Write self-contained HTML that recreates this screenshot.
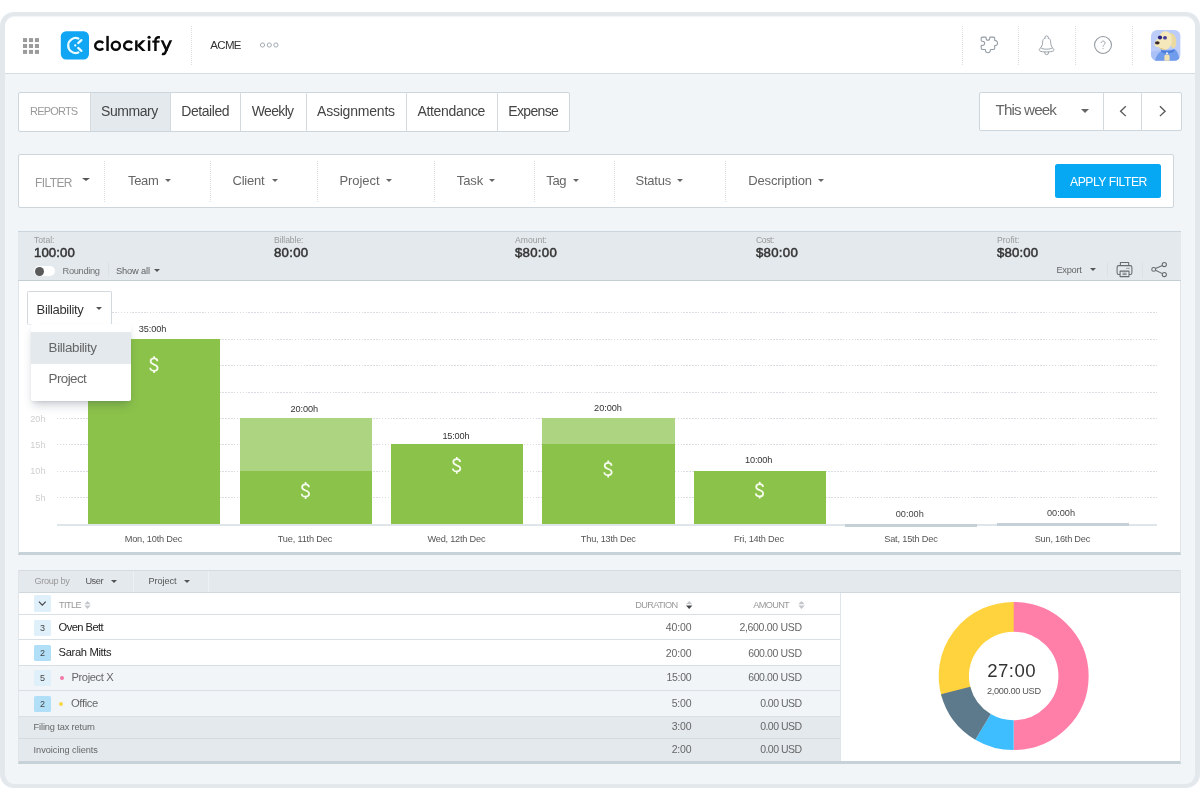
<!DOCTYPE html>
<html lang="en"><head><meta charset="utf-8"><title>Clockify - Summary report</title>
<style>
html,body{margin:0;padding:0;}
body{width:1200px;height:801px;position:relative;overflow:hidden;background:#fff;
 font-family:"Liberation Sans",sans-serif;}
.a{position:absolute;box-sizing:border-box;}
.t{position:absolute;white-space:nowrap;line-height:1;z-index:2;}
.t.z3{z-index:6;}
svg{position:absolute;overflow:visible;}
#frame{left:0px;top:12px;width:1200px;height:776px;border:4.6px solid #e3e8ed;border-left-width:5px;border-right-width:5px;border-radius:14px;background:#f1f5f8;}
#hdr{left:5px;top:16.5px;width:1190px;height:57.2px;background:#fff;border-radius:9.5px 9.5px 0 0;border-bottom:1.2px solid #d6dce1;}
.vd{width:0;border-left:1px dotted #d9dee3;}
.box{background:#fff;border:1px solid #cdd6dc;border-radius:2px;}
.sep{width:1px;background:#d3dadf;}
.caret{width:0;height:0;border-left:3.8px solid transparent;border-right:3.8px solid transparent;border-top:3.6px solid #666;}
.caret.sm{border-left-width:3.3px;border-right-width:3.3px;border-top-width:3.5px;border-top-color:#555;}
.caret.lg{border-left-width:4.5px;border-right-width:4.5px;border-top-width:4.6px;}
#sum{left:18.4px;top:231px;width:1163px;height:50px;background:#e4e9ed;border-top:1px solid #ccd5db;border-bottom:1.4px solid #c3ced5;}
#chart{left:18.4px;top:281px;width:1163px;height:274px;background:#fff;border-left:1px solid #dfe5e9;border-right:1px solid #dfe5e9;border-bottom:3.6px solid #c6d1d8;}
.gl{left:56.6px;width:1100.6px;height:1.2px;background:repeating-linear-gradient(to right,#d9dde1 0,#d9dde1 1.5px,rgba(255,255,255,0) 1.5px,rgba(255,255,255,0) 2.9px);}
.bar{background:#8bc24a;}
.barl{background:#add581;}
.bar0{background:#c5cfd6;height:3px;}
#menu{left:31px;top:323.8px;width:100.4px;height:77.4px;background:#fff;border-radius:2px;z-index:5;
 box-shadow:0 6px 9px -2px rgba(40,60,80,.24),0 2px 3px -1px rgba(40,60,80,.10);}
#menu .hi{position:absolute;left:0;top:7.8px;width:100%;height:32px;background:#e4e9ed;}
#tbl{left:18.4px;top:570.4px;width:1163px;height:193.4px;background:#fff;border-left:1px solid #dfe5e9;border-right:1px solid #dfe5e9;border-bottom:3.2px solid #c6d1d8;overflow:hidden;}
.row{left:0;width:821px;border-bottom:1px solid #d9e0e5;}
.bdg{left:34px;width:16.6px;height:16.4px;border-radius:1.5px;}
.b1{background:#e0f0fa;}
.b2{background:#b2dff8;}
.dot{width:4.2px;height:4.2px;border-radius:50%;}
#tx{position:absolute;left:0;top:0;width:1200px;height:801px;z-index:6;will-change:transform;}
.t.md{-webkit-text-stroke:0.5px #333;}

</style></head>
<body>
<div class="a" id="frame"></div>
<div class="a" id="hdr"></div>

<!-- ===== header: app grid, logo, workspace ===== -->
<svg style="left:22.5px;top:37.8px" width="16" height="16" viewBox="0 0 15.6 15.4">
 <g fill="#9b9b9b">
  <rect x="0" y="0" width="4" height="3.9"/><rect x="5.8" y="0" width="4" height="3.9"/><rect x="11.6" y="0" width="4" height="3.9"/>
  <rect x="0" y="5.75" width="4" height="3.9"/><rect x="5.8" y="5.75" width="4" height="3.9"/><rect x="11.6" y="5.75" width="4" height="3.9"/>
  <rect x="0" y="11.5" width="4" height="3.9"/><rect x="5.8" y="11.5" width="4" height="3.9"/><rect x="11.6" y="11.5" width="4" height="3.9"/>
 </g>
</svg>

<svg id="logo" style="left:55px;top:25px" width="125" height="40" viewBox="55 25 125 40">
 <rect x="60.8" y="31.2" width="28.2" height="28.3" rx="5.4" fill="#10a6f4"/>
 <g fill="none" stroke="#ecfbff" stroke-width="2.2" stroke-linecap="round">
  <path d="M78.4 38.5 A7.5 7.5 0 1 0 78.4 52.5"/>
  <path d="M78.2 43.1 L81.4 40.1"/>
  <path d="M78.2 47.9 L81.4 50.9"/>
 </g>
 <circle cx="75.25" cy="45.45" r="1.15" fill="#ecfbff"/>
 <defs><clipPath id="xh"><rect x="90" y="40.35" width="90" height="10.6"/></clipPath>
 <clipPath id="yh"><rect x="158" y="40.35" width="20" height="16"/></clipPath></defs>
 <g fill="none" stroke="#0a0a0a" stroke-width="2.45">
  <path d="M103.16 43.13 A4.45 4.1 0 1 0 103.16 48.17"/>
  <path d="M107.55 35.9 V50.95"/>
  <circle cx="115.85" cy="45.65" r="4.05"/>
  <path d="M132.1 43.13 A4.45 4.1 0 1 0 132.1 48.17"/>
  <path d="M136.35 40.35 V50.95"/>
  <path clip-path="url(#xh)" d="M144.9 39.2 L138.5 45.6 L145.2 52.2" stroke-linejoin="miter"/>
  <path d="M149.1 40.35 V50.95"/>
  <path d="M155.45 50.95 V40.4 A3.1 3.1 0 0 1 158.55 37.25 H159.9"/>
  <path d="M152.3 41.6 H159.5" stroke-width="2.1"/>
  <path clip-path="url(#yh)" d="M161.4 39 L166.9 51"/>
  <path clip-path="url(#yh)" d="M171.4 39 L165.3 52.6 Q164.3 54.6 161.9 53.9"/>
 </g>
 <circle cx="149.1" cy="37.25" r="1.6" fill="#0a0a0a"/>
</svg>

<div class="a vd" style="left:191px;top:26px;height:39px"></div>
<svg style="left:258px;top:41px" width="22" height="8" viewBox="258 41 22 8">
 <g fill="none" stroke="#a3abb2" stroke-width="1">
  <circle cx="262.5" cy="45" r="2.1"/><circle cx="269.3" cy="45" r="2.1"/><circle cx="275.9" cy="45" r="2.1"/>
 </g>
</svg>

<!-- header right -->
<div class="a vd" style="left:961.5px;top:26px;height:39px"></div>
<div class="a vd" style="left:1018.3px;top:26px;height:39px"></div>
<div class="a vd" style="left:1074.9px;top:26px;height:39px"></div>
<div class="a vd" style="left:1132px;top:26px;height:39px"></div>

<!-- puzzle -->
<svg id="puzzle" style="left:979px;top:35px" width="20" height="20" viewBox="979 35 20 20">
 <path fill="none" stroke="#949ca4" stroke-width="1.1" stroke-linejoin="round"
  d="M982.4 37.1 H985.5 C985.9 37.1 986.1 37.5 986.1 38 C986.1 39.4 986.9 40.3 987.9 40.3 C988.9 40.3 989.7 39.4 989.7 38 C989.7 37.5 989.9 37.1 990.3 37.1 H993.5 Q994.7 37.1 994.7 38.3 V40.2 C994.7 40.6 995 40.8 995.4 40.7 C996.6 40.5 997.5 41.6 997.5 43.1 C997.5 44.6 996.6 45.7 995.4 45.5 C995 45.4 994.7 45.6 994.7 46 V48.3 Q994.7 49.5 993.5 49.5 H990.8 C990.4 49.5 990.2 49.8 990.3 50.2 C990.6 51.5 989.5 52.7 987.9 52.7 C986.3 52.7 985.2 51.5 985.5 50.2 C985.6 49.8 985.4 49.5 985 49.5 H982.4 Q981.2 49.5 981.2 48.3 V46 C981.2 45.6 981.6 45.4 982 45.4 C983.6 45.5 984.7 44.6 984.7 43.3 C984.7 42 983.6 41.1 982 41.2 C981.6 41.2 981.2 41 981.2 40.6 V38.3 Q981.2 37.1 982.4 37.1 Z"/>
</svg>

<!-- bell -->
<svg id="bell" style="left:1037px;top:34px" width="20" height="22" viewBox="1037 34 20 22">
 <g fill="none" stroke="#9ca4ab" stroke-width="1" stroke-linejoin="round" stroke-linecap="round">
  <path d="M1045 38.2 V37.4 A1.65 1.5 0 0 1 1048.3 37.4 V38.2"/>
  <path d="M1045 38.2 C1043.2 38.5 1042.6 40 1042.6 42.4 C1042.6 45.3 1041.5 47 1039.9 48.6 C1039 49.5 1039 50.4 1039.8 50.9 C1042 52.3 1051.2 52.3 1053.4 50.9 C1054.2 50.4 1054.2 49.5 1053.3 48.6 C1051.7 47 1050.7 45.3 1050.7 42.4 C1050.7 40 1050.1 38.5 1048.3 38.2"/>
  <path d="M1040.6 47.9 C1043 49.7 1050.2 49.7 1052.6 47.9"/>
  <path d="M1044.8 52 V53 A1.85 1.6 0 0 0 1048.5 53 V52"/>
 </g>
</svg>

<!-- help -->
<svg id="help" style="left:1093px;top:34px" width="22" height="22" viewBox="1093 34 22 22">
 <circle cx="1103" cy="45" r="8.45" fill="none" stroke="#92989e" stroke-width="1.05"/>
 <path d="M1101.1 43 a2 2 0 1 1 3.1 1.7 c-0.8 0.55 -1.15 1 -1.15 2.1" fill="none" stroke="#a6abb0" stroke-width="1"/>
 <circle cx="1103.05" cy="48.6" r="0.65" fill="#a6abb0"/>
</svg>

<!-- avatar -->
<svg id="avatar" style="left:1151px;top:30.2px" width="29.6" height="30.8" viewBox="0 0 29.6 30.8">
 <defs><clipPath id="avc"><rect x="0" y="0" width="29.6" height="30.8" rx="6.3"/></clipPath></defs>
 <g clip-path="url(#avc)">
  <rect width="29.6" height="30.8" fill="#bccdf9"/>
  <path d="M0 31 L0 22 L9 20 L6 31 Z" fill="#a9c1f7"/>
  <path d="M4 31 C5 25 9 21 13 20 L24 19.5 C27 21.5 28 26 28.5 31 Z" fill="#719cec"/>
  <path d="M9.5 19.3 Q16 23.5 23.5 19 L23 21.8 Q16 25.2 10.5 22 Z" fill="#4c7dd9"/>
  <path d="M19 3 C23 3 25.5 7 25.3 12 C25.2 16 24 18.5 22 18 C20 17.5 19.5 14 19.5 11 Z" fill="#eadaa2"/>
  <path d="M14 1.2 C18 1 20.5 4 20.8 8 C21 13 20 17.5 16 19.3 C12 20.5 8.5 19.5 7.5 17 C5 17.5 3 15.5 3.5 13.5 C4 11.5 6 10 7.5 7 C9 4 11 1.5 14 1.2 Z" fill="#f5e8ba"/>
  <path d="M7.5 17 C9 19.5 12 20.3 15.5 19.4 C13 18.6 10 18.5 7.5 17 Z" fill="#d9c58c"/>
  <ellipse cx="9" cy="7.5" rx="2.1" ry="1.95" fill="#27257c"/>
  <ellipse cx="14" cy="7.75" rx="1.95" ry="1.85" fill="#463c9c"/>
  <ellipse cx="6.3" cy="12.8" rx="2.4" ry="1.6" fill="#3a2a2c"/>
  <rect x="13.4" y="24.4" width="5.2" height="8" rx="2.2" fill="#f1e2b4"/>
  <circle cx="16" cy="23.2" r="0.9" fill="#fff"/>
 </g>
</svg>

<!-- ===== tabs ===== -->
<div class="a box" style="left:18.2px;top:91.6px;width:551.6px;height:40px"></div>
<div class="a" style="left:90.6px;top:92.6px;width:79.6px;height:38px;background:#e4e9ed"></div>
<div class="a sep" style="left:90.2px;top:92px;height:39px"></div>
<div class="a sep" style="left:169.8px;top:92px;height:39px"></div>
<div class="a sep" style="left:240.2px;top:92px;height:39px"></div>
<div class="a sep" style="left:306px;top:92px;height:39px"></div>
<div class="a sep" style="left:406px;top:92px;height:39px"></div>
<div class="a sep" style="left:497.2px;top:92px;height:39px"></div>

<!-- date range -->
<div class="a box" style="left:979.3px;top:92px;width:202.6px;height:38.8px"></div>
<div class="a sep" style="left:1103px;top:92.5px;height:38px"></div>
<div class="a sep" style="left:1141.3px;top:92.5px;height:38px"></div>
<div class="a caret lg" style="left:1081px;top:109.4px"></div>
<svg style="left:1117px;top:104px" width="12" height="14" viewBox="1117 104 12 14"><path d="M1125.8 106.3 L1120.6 111.2 L1125.8 116.1" fill="none" stroke="#555" stroke-width="1.3"/></svg>
<svg style="left:1156px;top:104px" width="12" height="14" viewBox="1156 104 12 14"><path d="M1159.9 106.3 L1165.1 111.2 L1159.9 116.1" fill="none" stroke="#555" stroke-width="1.3"/></svg>

<!-- ===== filter bar ===== -->
<div class="a box" style="left:18.4px;top:154.4px;width:1155.6px;height:53.2px"></div>
<div class="a vd" style="left:104.4px;top:160.5px;height:41px"></div>
<div class="a vd" style="left:210.4px;top:160.5px;height:41px"></div>
<div class="a vd" style="left:316.6px;top:160.5px;height:41px"></div>
<div class="a vd" style="left:433.6px;top:160.5px;height:41px"></div>
<div class="a vd" style="left:534.1px;top:160.5px;height:41px"></div>
<div class="a vd" style="left:613.6px;top:160.5px;height:41px"></div>
<div class="a vd" style="left:724.8px;top:160.5px;height:41px"></div>
<div class="a caret" style="left:81.5px;top:178.3px;border-top-color:#555;border-left-width:4.1px;border-right-width:4.1px;border-top-width:3.8px"></div>
<div class="a caret" style="left:165.4px;top:178.7px"></div>
<div class="a caret" style="left:272px;top:178.7px"></div>
<div class="a caret" style="left:385.8px;top:178.7px"></div>
<div class="a caret" style="left:488.8px;top:178.7px"></div>
<div class="a caret" style="left:573px;top:178.7px"></div>
<div class="a caret" style="left:676.8px;top:178.7px"></div>
<div class="a caret" style="left:818.2px;top:178.7px"></div>
<div class="a" style="left:1055px;top:164.2px;width:106.3px;height:33.4px;background:#06a8f4;border-radius:2.5px"></div>

<!-- ===== summary bar ===== -->
<div class="a" id="sum"></div>
<div class="a" style="left:34.3px;top:266.3px;width:20.8px;height:9.8px;border-radius:5px;background:#fff"></div>
<div class="a" style="left:34.9px;top:266.6px;width:9.2px;height:9.2px;border-radius:50%;background:#5a5a5a"></div>
<div class="a sep" style="left:107.6px;top:262px;height:15px;background:#dbe1e6"></div>
<div class="a caret sm" style="left:153.8px;top:268.8px"></div>
<div class="a caret sm" style="left:1090.2px;top:268.2px"></div>
<div class="a sep" style="left:1106.8px;top:262px;height:15px;background:#dbe1e5"></div>
<div class="a sep" style="left:1141.8px;top:262px;height:15px;background:#dbe1e5"></div>
<!-- printer -->
<svg id="printer" style="left:1115px;top:260px" width="20" height="19" viewBox="1115 260 20 19">
 <g fill="none" stroke="#666b70" stroke-width="1.05" stroke-linejoin="round">
  <path d="M1120.4 265.6 V262.4 H1128.7 V265.6"/>
  <rect x="1117.1" y="265.6" width="14.8" height="8.8" rx="1.7"/>
  <rect x="1120.1" y="271.1" width="8.9" height="5.5" fill="#e4e9ed"/>
  <path d="M1122.5 273.2 h4.1 M1122.5 274.6 h4.1" stroke-width="0.8"/>
  <path d="M1126.4 268.3 h3" stroke-width="1" stroke-dasharray="1.1 0.8"/>
 </g>
</svg>
<!-- share -->
<svg id="share" style="left:1150px;top:260px" width="20" height="19" viewBox="1150 260 20 19">
 <g fill="none" stroke="#666b70" stroke-width="1.05">
  <circle cx="1153.7" cy="269.4" r="1.95"/>
  <circle cx="1164.3" cy="264.5" r="2.1"/>
  <circle cx="1164.3" cy="274.5" r="2.1"/>
  <path d="M1155.5 268.5 L1162.4 265.4 M1155.5 270.3 L1162.4 273.6"/>
 </g>
</svg>

<!-- ===== chart ===== -->
<div class="a" id="chart"></div>
<div class="a gl" style="top:312.3px"></div>
<div class="a gl" style="top:338.7px"></div>
<div class="a gl" style="top:365.1px"></div>
<div class="a gl" style="top:391.5px"></div>
<div class="a gl" style="top:417.9px"></div>
<div class="a gl" style="top:444.3px"></div>
<div class="a gl" style="top:470.7px"></div>
<div class="a gl" style="top:497.1px"></div>
<div class="a" style="left:56.6px;top:524px;width:1100.6px;height:2.2px;background:#dfe6ea"></div>
<div class="a bar" style="left:88px;top:338.6px;width:132.4px;height:185.6px"></div>
<div class="a barl" style="left:239.8px;top:418px;width:132.3px;height:54px"></div>
<div class="a bar" style="left:239.8px;top:471.2px;width:132.3px;height:53px"></div>
<div class="a bar" style="left:391px;top:444.2px;width:132.3px;height:80px"></div>
<div class="a barl" style="left:542.2px;top:418px;width:132.5px;height:27px"></div>
<div class="a bar" style="left:542.2px;top:444.2px;width:132.5px;height:80px"></div>
<div class="a bar" style="left:693.9px;top:471.3px;width:132.3px;height:52.9px"></div>
<div class="a bar0" style="left:844.8px;top:523.6px;width:132.6px"></div>
<div class="a bar0" style="left:996.5px;top:523.3px;width:132.8px"></div>
<!-- dollar icons -->
<svg style="left:0;top:0;z-index:1" width="1200" height="801" viewBox="0 0 1200 801">
 <g fill="none" stroke="#f6fcee" stroke-width="1.75">
  <g transform="translate(153.9 364.6)"><path d="M3.5 -3.3 C3.5 -5 2 -6.2 0.2 -6.2 C-1.8 -6.2 -3.3 -5 -3.3 -3.3 C-3.3 -1.4 -1.8 -0.7 0.2 0 C2.4 0.7 3.7 1.5 3.7 3.3 C3.7 5 2.2 6.2 0.2 6.2 C-1.9 6.2 -3.6 5 -3.7 3.2"/><path d="M0.2 -8.4 V-6 M0.2 6 V8.4"/></g>
  <g transform="translate(305.4 490.5)"><path d="M3.5 -3.3 C3.5 -5 2 -6.2 0.2 -6.2 C-1.8 -6.2 -3.3 -5 -3.3 -3.3 C-3.3 -1.4 -1.8 -0.7 0.2 0 C2.4 0.7 3.7 1.5 3.7 3.3 C3.7 5 2.2 6.2 0.2 6.2 C-1.9 6.2 -3.6 5 -3.7 3.2"/><path d="M0.2 -8.4 V-6 M0.2 6 V8.4"/></g>
  <g transform="translate(456.6 465.3)"><path d="M3.5 -3.3 C3.5 -5 2 -6.2 0.2 -6.2 C-1.8 -6.2 -3.3 -5 -3.3 -3.3 C-3.3 -1.4 -1.8 -0.7 0.2 0 C2.4 0.7 3.7 1.5 3.7 3.3 C3.7 5 2.2 6.2 0.2 6.2 C-1.9 6.2 -3.6 5 -3.7 3.2"/><path d="M0.2 -8.4 V-6 M0.2 6 V8.4"/></g>
  <g transform="translate(608 469)"><path d="M3.5 -3.3 C3.5 -5 2 -6.2 0.2 -6.2 C-1.8 -6.2 -3.3 -5 -3.3 -3.3 C-3.3 -1.4 -1.8 -0.7 0.2 0 C2.4 0.7 3.7 1.5 3.7 3.3 C3.7 5 2.2 6.2 0.2 6.2 C-1.9 6.2 -3.6 5 -3.7 3.2"/><path d="M0.2 -8.4 V-6 M0.2 6 V8.4"/></g>
  <g transform="translate(759.5 490.2)"><path d="M3.5 -3.3 C3.5 -5 2 -6.2 0.2 -6.2 C-1.8 -6.2 -3.3 -5 -3.3 -3.3 C-3.3 -1.4 -1.8 -0.7 0.2 0 C2.4 0.7 3.7 1.5 3.7 3.3 C3.7 5 2.2 6.2 0.2 6.2 C-1.9 6.2 -3.6 5 -3.7 3.2"/><path d="M0.2 -8.4 V-6 M0.2 6 V8.4"/></g>
 </g>
</svg>
<!-- dropdown button -->
<div class="a box" style="left:27.4px;top:291.4px;width:84.4px;height:33.2px;border-color:#d3dadf;border-bottom-color:#e9edf0"></div>
<div class="a caret" style="left:95.6px;top:307px;border-top-color:#555"></div>
<div class="a" id="menu"><div class="hi"></div></div>

<!-- ===== table ===== -->
<div class="a" id="tbl">
 <div class="a" style="left:0;top:0;width:1163px;height:22.4px;background:#e4e9ed;border-top:1px solid #d5dce1;border-bottom:1px solid #d0d8de"></div>
 <div class="a sep" style="left:113.4px;top:1px;height:21px;background:#edf1f4"></div>
 <div class="a sep" style="left:188.2px;top:1px;height:21px;background:#edf1f4"></div>
 <div class="a row" style="top:22.4px;height:21.8px;background:#fff"></div>
 <div class="a row" style="top:44.2px;height:25.2px;background:#fff"></div>
 <div class="a row" style="top:69.4px;height:26px;background:#fff"></div>
 <div class="a row" style="top:95.4px;height:25.5px;background:#f1f5f8"></div>
 <div class="a row" style="top:120.9px;height:25.5px;background:#f1f5f8"></div>
 <div class="a row" style="top:146.4px;height:22.2px;background:#e4e9ed;border-bottom-color:#d3dae0"></div>
 <div class="a row" style="top:168.6px;height:22px;background:#e4e9ed;border-bottom:0"></div>
 <div class="a sep" style="left:820.7px;top:22.4px;height:168px;background:#dfe5e9"></div>
</div>
<!-- header row controls -->
<div class="a bdg b1" style="top:595.4px"></div>
<svg style="left:37px;top:599px" width="11" height="9" viewBox="37 599 11 9"><path d="M38.9 601.7 L42.3 605.1 L45.7 601.7" fill="none" stroke="#444" stroke-width="1.2"/></svg>
<svg style="left:84px;top:600px" width="8" height="10" viewBox="84 600 8 10"><path d="M84.4 604.2 L87.5 600.9 L90.6 604.2 Z M84.4 605.6 L87.5 608.9 L90.6 605.6 Z" fill="#c2c6ca"/></svg>
<svg style="left:685px;top:600px" width="9" height="10" viewBox="685 600 9 10"><path d="M686 604.2 L689.2 600.9 L692.4 604.2 Z" fill="#c2c6ca"/><path d="M686 605.6 L689.2 608.9 L692.4 605.6 Z" fill="#444"/></svg>
<svg style="left:797px;top:600px" width="9" height="10" viewBox="797 600 9 10"><path d="M798.3 604.2 L801.5 600.9 L804.7 604.2 Z M798.3 605.6 L801.5 608.9 L804.7 605.6 Z" fill="#c2c6ca"/></svg>
<div class="a caret sm" style="left:111.2px;top:579.6px"></div>
<div class="a caret sm" style="left:184.2px;top:579.6px"></div>
<div class="a bdg b1" style="top:620.1px"></div>
<div class="a bdg b2" style="top:644.5px"></div>
<div class="a bdg b1" style="top:670.1px"></div>
<div class="a bdg b2" style="top:695.6px"></div>
<div class="a dot" style="left:59.5px;top:675.5px;background:#f27aa5"></div>
<div class="a dot" style="left:58.9px;top:701.9px;background:#f6d84a"></div>

<!-- donut -->
<svg id="donut" style="left:930px;top:595px" width="170" height="162" viewBox="930 595 170 162">
 <g fill="none" stroke-width="30.2" transform="translate(0 676) scale(1 0.988) translate(0 -675.8)">
  <path d="M956.4 693.3 A59.9 59.9 0 0 1 1014.5 615.9" stroke="#ffd33d"/>
  <path d="M1013.7 615.9 A59.9 59.9 0 0 1 1013.7 735.7" stroke="#ff7fa8"/>
  <path d="M1013.7 735.7 A59.9 59.9 0 0 1 983.03 727.25" stroke="#3ebeff"/>
  <path d="M983.03 727.25 A59.9 59.9 0 0 1 955.63 690.5" stroke="#5d7a8c"/>
 </g>
</svg>

<div id="tx">
<span class="t" id="t0" style="top:40.00px;font-size:11.5px;color:#333;letter-spacing:-0.681px;left:210.30px;">ACME</span>
<span class="t" id="t1" style="top:106.00px;font-size:11px;color:#9a9a9a;letter-spacing:-0.804px;left:30.00px;">REPORTS</span>
<span class="t" id="t2" style="top:104.00px;font-size:14px;color:#444;letter-spacing:-0.428px;left:101.00px;">Summary</span>
<span class="t" id="t3" style="top:104.00px;font-size:14px;color:#444;letter-spacing:-0.434px;left:181.25px;">Detailed</span>
<span class="t" id="t4" style="top:104.00px;font-size:14px;color:#444;letter-spacing:-0.663px;left:251.75px;">Weekly</span>
<span class="t" id="t5" style="top:104.00px;font-size:14px;color:#444;letter-spacing:-0.207px;left:317.00px;">Assignments</span>
<span class="t" id="t6" style="top:104.00px;font-size:14px;color:#444;letter-spacing:-0.334px;left:417.50px;">Attendance</span>
<span class="t" id="t7" style="top:104.00px;font-size:14px;color:#444;letter-spacing:-0.649px;left:508.25px;">Expense</span>
<span class="t" id="t8" style="top:102.00px;font-size:15.2px;color:#666;letter-spacing:-0.883px;left:995.60px;">This week</span>
<span class="t" id="t9" style="top:177.00px;font-size:12px;color:#999;letter-spacing:-0.597px;left:35.00px;">FILTER</span>
<span class="t" id="t10" style="top:174.00px;font-size:13px;color:#666;letter-spacing:-0.339px;left:128.00px;">Team</span>
<span class="t" id="t11" style="top:174.00px;font-size:13px;color:#666;letter-spacing:-0.244px;left:232.50px;">Client</span>
<span class="t" id="t12" style="top:174.00px;font-size:13px;color:#666;letter-spacing:-0.073px;left:339.50px;">Project</span>
<span class="t" id="t13" style="top:174.00px;font-size:13px;color:#666;letter-spacing:-0.068px;left:456.75px;">Task</span>
<span class="t" id="t14" style="top:174.00px;font-size:13px;color:#666;letter-spacing:-0.344px;left:546.25px;">Tag</span>
<span class="t" id="t15" style="top:174.00px;font-size:13px;color:#666;letter-spacing:-0.216px;left:635.50px;">Status</span>
<span class="t" id="t16" style="top:174.00px;font-size:13px;color:#666;letter-spacing:-0.125px;left:748.25px;">Description</span>
<span class="t" id="t17" style="top:176.00px;font-size:12.2px;color:#fff;letter-spacing:-0.474px;left:1070.00px;">APPLY FILTER</span>
<span class="t" id="t18" style="top:236.00px;font-size:8.6px;color:#999;letter-spacing:-0.006px;left:34.00px;">Total:</span>
<span class="t md" id="t19" style="top:246.00px;font-size:13.2px;color:#333;letter-spacing:0.090px;left:34.00px;">100:00</span>
<span class="t" id="t20" style="top:236.00px;font-size:8.6px;color:#999;letter-spacing:-0.074px;left:274.00px;">Billable:</span>
<span class="t md" id="t21" style="top:246.00px;font-size:13.2px;color:#333;letter-spacing:0.269px;left:274.00px;">80:00</span>
<span class="t" id="t22" style="top:236.00px;font-size:8.6px;color:#999;letter-spacing:0.000px;left:515.00px;">Amount:</span>
<span class="t md" id="t23" style="top:246.00px;font-size:13.2px;color:#333;letter-spacing:0.290px;left:515.00px;">$80:00</span>
<span class="t" id="t24" style="top:236.00px;font-size:8.6px;color:#999;letter-spacing:-0.387px;left:756.00px;">Cost:</span>
<span class="t md" id="t25" style="top:246.00px;font-size:13.2px;color:#333;letter-spacing:0.290px;left:756.00px;">$80:00</span>
<span class="t" id="t26" style="top:236.00px;font-size:8.6px;color:#999;letter-spacing:0.010px;left:997.00px;">Profit:</span>
<span class="t md" id="t27" style="top:246.00px;font-size:13.2px;color:#333;letter-spacing:0.170px;left:997.00px;">$80:00</span>
<span class="t" id="t28" style="top:267.00px;font-size:9.3px;color:#707070;letter-spacing:-0.351px;left:62.60px;">Rounding</span>
<span class="t" id="t29" style="top:267.00px;font-size:9.3px;color:#606060;letter-spacing:-0.169px;left:116.00px;">Show all</span>
<span class="t" id="t30" style="top:266.00px;font-size:9.3px;color:#666;letter-spacing:-0.263px;left:1056.40px;">Export</span>
<span class="t" id="t31" style="top:303.00px;font-size:13px;color:#333;letter-spacing:-0.340px;left:36.60px;">Billability</span>
<span class="t z3" id="t32" style="top:341.00px;font-size:13.4px;color:#666;letter-spacing:-0.369px;left:48.60px;">Billability</span>
<span class="t z3" id="t33" style="top:372.00px;font-size:13.4px;color:#666;letter-spacing:-0.581px;left:48.60px;">Project</span>
<span class="t" id="t34" style="top:325.00px;font-size:9.2px;color:#333;letter-spacing:-0.111px;left:152.44px;transform:translateX(-50%);">35:00h</span>
<span class="t" id="t35" style="top:405.00px;font-size:9.2px;color:#333;letter-spacing:-0.071px;left:304.26px;transform:translateX(-50%);">20:00h</span>
<span class="t" id="t36" style="top:432.00px;font-size:9.2px;color:#333;letter-spacing:-0.191px;left:455.90px;transform:translateX(-50%);">15:00h</span>
<span class="t" id="t37" style="top:404.00px;font-size:9.2px;color:#333;letter-spacing:-0.071px;left:607.96px;transform:translateX(-50%);">20:00h</span>
<span class="t" id="t38" style="top:456.00px;font-size:9.2px;color:#333;letter-spacing:-0.171px;left:758.61px;transform:translateX(-50%);">10:00h</span>
<span class="t" id="t39" style="top:510.00px;font-size:9.2px;color:#444;letter-spacing:-0.011px;left:909.79px;transform:translateX(-50%);">00:00h</span>
<span class="t" id="t40" style="top:509.00px;font-size:9.2px;color:#444;letter-spacing:-0.011px;left:1060.99px;transform:translateX(-50%);">00:00h</span>
<span class="t" id="t41" style="top:415.00px;font-size:9.2px;color:#cfcfcf;left:45.60px;transform:translateX(-100%);">20h</span>
<span class="t" id="t42" style="top:441.00px;font-size:9.2px;color:#cfcfcf;left:45.60px;transform:translateX(-100%);">15h</span>
<span class="t" id="t43" style="top:467.00px;font-size:9.2px;color:#cfcfcf;left:45.60px;transform:translateX(-100%);">10h</span>
<span class="t" id="t44" style="top:494.00px;font-size:9.2px;color:#cfcfcf;left:45.60px;transform:translateX(-100%);">5h</span>
<span class="t" id="t45" style="top:535.00px;font-size:9.2px;color:#555;letter-spacing:-0.184px;left:153.41px;transform:translateX(-50%);">Mon, 10th Dec</span>
<span class="t" id="t46" style="top:535.00px;font-size:9.2px;color:#555;letter-spacing:-0.178px;left:304.91px;transform:translateX(-50%);">Tue, 11th Dec</span>
<span class="t" id="t47" style="top:535.00px;font-size:9.2px;color:#555;letter-spacing:-0.213px;left:456.39px;transform:translateX(-50%);">Wed, 12th Dec</span>
<span class="t" id="t48" style="top:535.00px;font-size:9.2px;color:#555;letter-spacing:-0.222px;left:608.29px;transform:translateX(-50%);">Thu, 13th Dec</span>
<span class="t" id="t49" style="top:535.00px;font-size:9.2px;color:#555;letter-spacing:-0.212px;left:758.89px;transform:translateX(-50%);">Fri, 14th Dec</span>
<span class="t" id="t50" style="top:535.00px;font-size:9.2px;color:#555;letter-spacing:-0.177px;left:910.91px;transform:translateX(-50%);">Sat, 15th Dec</span>
<span class="t" id="t51" style="top:535.00px;font-size:9.2px;color:#555;letter-spacing:-0.224px;left:1062.39px;transform:translateX(-50%);">Sun, 16th Dec</span>
<span class="t" id="t52" style="top:577.00px;font-size:9.2px;color:#999;letter-spacing:-0.321px;left:34.40px;">Group by</span>
<span class="t" id="t53" style="top:577.00px;font-size:9.2px;color:#555;letter-spacing:-0.418px;left:85.40px;">User</span>
<span class="t" id="t54" style="top:577.00px;font-size:9.2px;color:#555;letter-spacing:-0.076px;left:148.40px;">Project</span>
<span class="t" id="t55" style="top:601.00px;font-size:9.2px;color:#999;letter-spacing:-0.616px;left:59.00px;">TITLE</span>
<span class="t" id="t56" style="top:601.00px;font-size:9.2px;color:#999;letter-spacing:-0.635px;left:635.30px;">DURATION</span>
<span class="t" id="t57" style="top:601.00px;font-size:9.2px;color:#999;letter-spacing:-0.652px;left:753.20px;">AMOUNT</span>
<span class="t" id="t58" style="top:622.00px;font-size:11.2px;color:#222;letter-spacing:-0.585px;left:58.60px;">Oven Bett</span>
<span class="t" id="t59" style="top:647.00px;font-size:11.2px;color:#222;letter-spacing:-0.351px;left:58.60px;">Sarah Mitts</span>
<span class="t" id="t60" style="top:672.00px;font-size:11.2px;color:#666;letter-spacing:-0.390px;left:71.40px;">Project X</span>
<span class="t" id="t61" style="top:698.00px;font-size:11.2px;color:#666;letter-spacing:-0.352px;left:71.00px;">Office</span>
<span class="t" id="t62" style="top:723.00px;font-size:9.2px;color:#666;letter-spacing:-0.124px;left:33.60px;">Filing tax return</span>
<span class="t" id="t63" style="top:746.00px;font-size:9.2px;color:#666;letter-spacing:-0.032px;left:33.60px;">Invoicing clients</span>
<span class="t" id="t64" style="top:622.00px;font-size:10.5px;color:#666;letter-spacing:-0.163px;left:691.34px;transform:translateX(-100%);">40:00</span>
<span class="t" id="t65" style="top:648.00px;font-size:10.5px;color:#666;letter-spacing:-0.163px;left:691.34px;transform:translateX(-100%);">20:00</span>
<span class="t" id="t66" style="top:672.00px;font-size:10.5px;color:#666;letter-spacing:-0.313px;left:691.19px;transform:translateX(-100%);">15:00</span>
<span class="t" id="t67" style="top:698.00px;font-size:10.5px;color:#666;letter-spacing:-0.203px;left:691.30px;transform:translateX(-100%);">5:00</span>
<span class="t" id="t68" style="top:721.00px;font-size:10.5px;color:#666;letter-spacing:-0.203px;left:691.30px;transform:translateX(-100%);">3:00</span>
<span class="t" id="t69" style="top:744.00px;font-size:10.5px;color:#666;letter-spacing:-0.203px;left:691.30px;transform:translateX(-100%);">2:00</span>
<span class="t" id="t70" style="top:622.00px;font-size:10.5px;color:#666;letter-spacing:-0.304px;left:801.70px;transform:translateX(-100%);">2,600.00 USD</span>
<span class="t" id="t71" style="top:648.00px;font-size:10.5px;color:#666;letter-spacing:-0.375px;left:801.63px;transform:translateX(-100%);">600.00 USD</span>
<span class="t" id="t72" style="top:672.00px;font-size:10.5px;color:#666;letter-spacing:-0.375px;left:801.63px;transform:translateX(-100%);">600.00 USD</span>
<span class="t" id="t73" style="top:698.00px;font-size:10.5px;color:#666;letter-spacing:-0.529px;left:801.47px;transform:translateX(-100%);">0.00 USD</span>
<span class="t" id="t74" style="top:721.00px;font-size:10.5px;color:#666;letter-spacing:-0.529px;left:801.47px;transform:translateX(-100%);">0.00 USD</span>
<span class="t" id="t75" style="top:744.00px;font-size:10.5px;color:#666;letter-spacing:-0.529px;left:801.47px;transform:translateX(-100%);">0.00 USD</span>
<span class="t" id="t76" style="top:624.00px;font-size:9px;color:#444;left:42.40px;transform:translateX(-50%);">3</span>
<span class="t" id="t77" style="top:649.00px;font-size:9px;color:#444;left:42.40px;transform:translateX(-50%);">2</span>
<span class="t" id="t78" style="top:674.00px;font-size:9px;color:#444;left:42.40px;transform:translateX(-50%);">5</span>
<span class="t" id="t79" style="top:700.00px;font-size:9px;color:#444;left:42.40px;transform:translateX(-50%);">2</span>
<span class="t" id="t80" style="top:662.00px;font-size:18.6px;color:#333;letter-spacing:0.496px;left:1011.65px;transform:translateX(-50%);">27:00</span>
<span class="t" id="t81" style="top:687.00px;font-size:9.2px;color:#555;letter-spacing:-0.333px;left:1013.83px;transform:translateX(-50%);">2,000.00 USD</span>
</div>
</body></html>
